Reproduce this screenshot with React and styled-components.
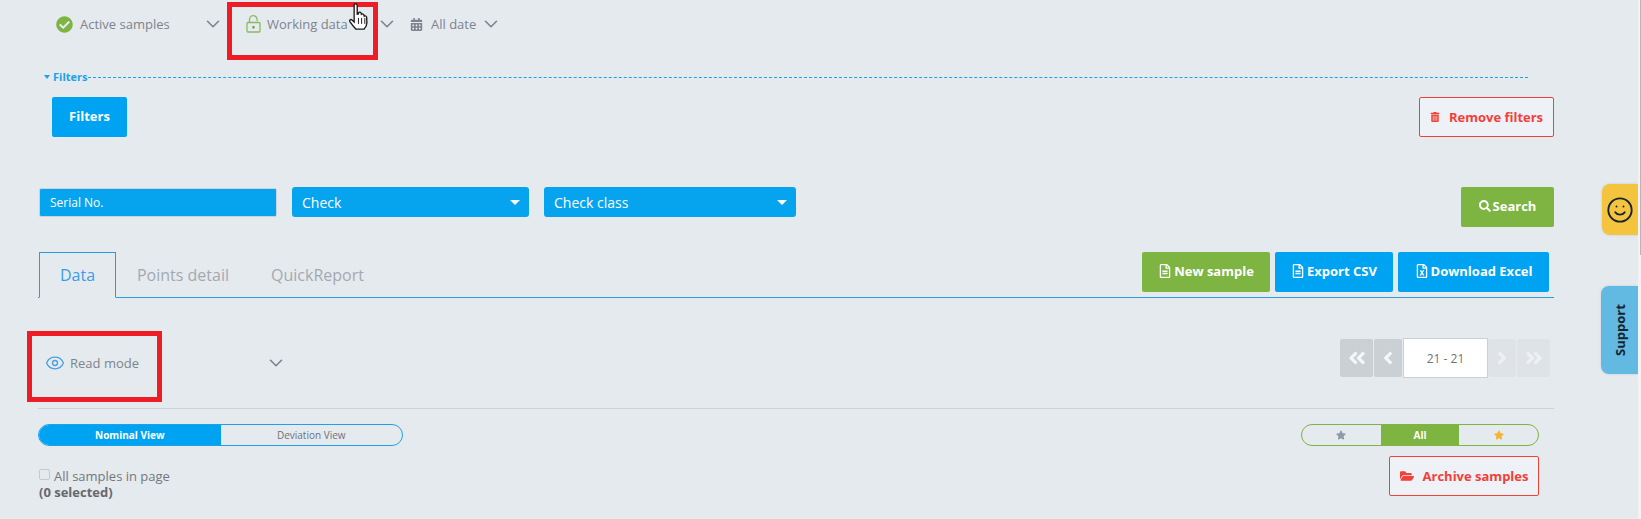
import React from 'react'
import styled, { createGlobalStyle } from 'styled-components'
import { ChevronDown, Eye, Smile } from 'lucide-react'
import {
  FaCheckCircle, FaCalendarAlt, FaTrashAlt, FaSearch, FaRegFileAlt, FaRegFileExcel,
  FaFolderOpen, FaStar, FaAngleDoubleLeft, FaAngleDoubleRight, FaAngleLeft, FaAngleRight,
} from 'react-icons/fa'

const GlobalStyle = createGlobalStyle`
html, body {
  margin: 0;
  height: 519px;
  overflow: hidden;
  background: #e5eaef;
  font-family: "Open Sans", "Liberation Sans", sans-serif;
}
* { box-sizing: border-box; }
`

const Page = styled.div`
position: relative;
width: 1641px;
height: 519px;
overflow: hidden;
padding: 0 87px 0 38px;
`

const TopBar = styled.div`
display: flex;
align-items: center;
height: 48px;
padding-left: 18px;
`

const Selector = styled.div`
display: flex;
align-items: center;
width: ${props => props.$width}px;
margin-right: ${props => props.$gap || 0}px;
color: #7d848d;
font-size: 13px;
`

const SelectorLabel = styled.span`
margin-left: ${props => props.$offset || 6}px;
flex: ${props => props.$grow ? 1 : 'none'};
width: ${props => props.$width ? props.$width + 'px' : 'auto'};
white-space: nowrap;
`

const Chevron = styled(ChevronDown)`
width: 22px;
height: 22px;
color: #7b828a;
stroke-width: 1.7;
margin-left: ${props => props.$left || 0}px;
flex: none;
`

const Legend = styled.div`
display: flex;
align-items: center;
height: 12px;
margin: 23px 26px 0 6px;
color: #1ea1ea;
font-size: 11px;
font-weight: 700;
`

const LegendText = styled.span`
margin-top: -2px;
`

const LegendCaret = styled.span`
width: 0;
height: 0;
border-left: 3.5px solid transparent;
border-right: 3.5px solid transparent;
border-top: 4px solid #1ea1ea;
margin-right: 3px;
`

const LegendLine = styled.span`
flex: 1;
border-top: 1px dashed #1ea1ea;
`

const FilterRow = styled.div`
display: flex;
justify-content: space-between;
margin-top: 14px;
padding-left: 14px;
`

const Button = styled.button`
display: inline-flex;
align-items: center;
justify-content: center;
gap: 2px;
height: 40px;
width: ${props => props.$width}px;
padding: 0 0 2px;
border: 0;
border-radius: 2px;
background: ${props => props.$green ? '#7eb441' : '#00a3f2'};
color: #fff;
font: 700 13px "Open Sans", sans-serif;
`

const DangerButton = styled.button`
display: inline-flex;
align-items: center;
justify-content: center;
gap: 9px;
height: 40px;
width: ${props => props.$width}px;
padding: 0 0 1px;
border: 1px solid #f24236;
border-radius: 2px;
background: #eef1f5;
color: #f2403a;
font: 700 13px "Open Sans", sans-serif;
`

const SearchRow = styled.div`
display: flex;
align-items: flex-start;
margin-top: 50px;
padding-left: 1px;
`

const SerialInput = styled.div`
display: flex;
align-items: center;
width: 238px;
height: 29px;
margin: 1px -1px 0 0;
padding-left: 10px;
border: 1px solid #c9d3da;
border-radius: 2px;
background: #06a4ef;
color: #fff;
font-size: 12px;
`

const Select = styled.div`
display: flex;
align-items: center;
justify-content: space-between;
width: ${props => props.$width}px;
height: 30px;
margin-left: ${props => props.$left}px;
padding: 0 9px 0 10px;
border-radius: 3px;
background: #06a4ef;
color: #fff;
font-size: 14px;
`

const SelectCaret = styled.span`
width: 0;
height: 0;
border-left: 5.5px solid transparent;
border-right: 5.5px solid transparent;
border-top: 5px solid #fff;
`

const SearchSlot = styled.div`
margin-left: auto;
`

const TabsBar = styled.div`
display: flex;
align-items: flex-start;
justify-content: space-between;
height: 46px;
margin-top: 25px;
padding: 0 5px 0 1px;
border-bottom: 1px solid #2b9ae0;
`

const Tabs = styled.div`
display: flex;
`

const Tab = styled.div`
height: ${props => props.$active ? 46 : 45}px;
width: ${props => props.$width}px;
border: 1px solid ${props => props.$active ? '#2b9ae0' : 'transparent'};
border-bottom-color: ${props => props.$active ? '#e5eaef' : 'transparent'};
color: ${props => props.$active ? '#3a9de6' : '#a3a9b0'};
font-size: 16px;
line-height: 44px;
text-align: center;
`

const Actions = styled.div`
display: flex;
gap: 5px;
`

const ModeRow = styled.div`
display: flex;
justify-content: space-between;
height: 111px;
padding: 40px 4px 0 7px;
border-bottom: 1px solid #cdd2d6;
`

const ModeSelector = styled.div`
display: flex;
align-items: center;
height: 50px;
color: #7d848d;
font-size: 13px;
`

const Pager = styled.div`
display: flex;
align-items: center;
gap: 1px;
height: 40px;
`

const PagerButton = styled.div`
display: flex;
align-items: center;
justify-content: center;
width: ${props => props.$width}px;
height: 38px;
border-radius: 2px;
background: ${props => props.$off ? '#dfe3e7' : '#cbd0d5'};
color: ${props => props.$off ? '#eef1f3' : '#f4f6f7'};
font-size: 20px;
`

const PagerInput = styled.div`
display: flex;
align-items: center;
justify-content: center;
width: 85px;
height: 40px;
margin-right: -1px;
border: 1px solid #cbd0d5;
background: #fff;
color: #6f7479;
font-size: 12px;
`

const Lower = styled.div`
display: flex;
justify-content: space-between;
margin-top: 15px;
padding-right: 15px;
`

const LeftColumn = styled.div`
display: flex;
flex-direction: column;
`

const RightColumn = styled.div`
display: flex;
flex-direction: column;
align-items: flex-end;
gap: 10px;
`

const Toggle = styled.div`
display: flex;
width: ${props => props.$width}px;
height: 22px;
overflow: hidden;
border: 1px solid ${props => props.$color};
border-radius: 11px;
`

const ToggleItem = styled.div`
display: flex;
align-items: center;
justify-content: center;
flex: 1;
background: ${props => props.$on || 'transparent'};
color: ${props => props.$on ? '#fff' : '#6d7278'};
font: ${props => props.$on ? 700 : 400} 10px "Open Sans", sans-serif;
`

const StarIcon = styled(FaStar)`
width: 10px;
height: 10px;
color: ${props => props.color};
`

const CheckLine = styled.label`
display: flex;
align-items: center;
height: 16px;
margin: 22px 0 0 1px;
color: #74777b;
font-size: 13px;
`

const CheckBox = styled.span`
width: 11px;
height: 11px;
margin: -4px 4px 0 0;
border: 1px solid #c5cacf;
border-radius: 2px;
`

const Selected = styled.div`
margin-left: 1px;
color: #66686b;
font-size: 13px;
font-weight: 700;
line-height: 17px;
`

const RowCheck = styled.div`
width: 10px;
height: 10px;
margin: 22px 0 0 288px;
background: #c5c8cb;
`

const RedBox = styled.div`
position: absolute;
left: ${props => props.$x}px;
top: ${props => props.$y}px;
width: ${props => props.$w}px;
height: ${props => props.$h}px;
border: 5px solid #ee1c25;
pointer-events: none;
`

const HandCursor = styled.svg`
position: absolute;
left: 349px;
top: 3px;
width: 19px;
height: 28px;
`

const SideTab = styled.div`
position: absolute;
right: 3px;
top: ${props => props.$top}px;
display: flex;
align-items: center;
justify-content: center;
width: ${props => props.$w}px;
height: ${props => props.$h}px;
border-radius: 8px 0 0 8px;
background: ${props => props.$bg};
box-shadow: 0 0 3px rgba(0, 0, 0, .12);
color: #16242c;
`

const SupportLabel = styled.span`
transform: rotate(-90deg);
font-size: 13px;
font-weight: 700;
`

const ScrollTrack = styled.div`
position: absolute;
right: 0;
top: 0;
width: 3px;
height: 519px;
background: #f1f3f5;
`

const ScrollThumb = styled.div`
margin-left: 2px;
width: 1px;
height: 255px;
background: #b4b6b8;
`

const OpenLock = () => (
  <svg width="15" height="18" viewBox="0 0 15 18" fill="none" stroke="#86bd5b" strokeWidth="1.3">
    <rect x="1" y="7.5" width="13" height="9.5" rx="1" />
    <path d="M3.5 7.5V4.5a3.8 3.8 0 0 1 7.6 0V6" />
    <path d="M7.5 11v2.5" stroke="#7a8a3a" strokeWidth="2" />
  </svg>
)

const App = () => {
  return (
    <Page>
      <GlobalStyle />
      <TopBar>
        <Selector $width={168} $gap={22}>
          <FaCheckCircle size={17} color="#7eb441" />
          <SelectorLabel $grow $offset={7}>Active samples</SelectorLabel>
          <Chevron />
        </Selector>
        <Selector $width={152} $gap={12}>
          <OpenLock />
          <SelectorLabel $grow>Working data</SelectorLabel>
          <Chevron />
        </Selector>
        <Selector $width={110}>
          <FaCalendarAlt size={13} color="#7d848d" />
          <SelectorLabel $offset={8}>All date</SelectorLabel>
          <Chevron $left={4} />
        </Selector>
      </TopBar>

      <Legend>
        <LegendCaret />
        <LegendText>Filters</LegendText>
        <LegendLine />
      </Legend>

      <FilterRow>
        <Button $width={75}>Filters</Button>
        <DangerButton $width={135}><FaTrashAlt size={10} />Remove filters</DangerButton>
      </FilterRow>

      <SearchRow>
        <SerialInput>Serial No.</SerialInput>
        <Select $width={237} $left={16}>Check<SelectCaret /></Select>
        <Select $width={252} $left={15}>Check class<SelectCaret /></Select>
        <SearchSlot>
          <Button $width={93} $green><FaSearch size={12} />Search</Button>
        </SearchSlot>
      </SearchRow>

      <TabsBar>
        <Tabs>
          <Tab $active $width={77}>Data</Tab>
          <Tab $width={134}>Points detail</Tab>
          <Tab $width={135}>QuickReport</Tab>
        </Tabs>
        <Actions>
          <Button $width={128} $green><FaRegFileAlt size={14} />New sample</Button>
          <Button $width={118}><FaRegFileAlt size={14} />Export CSV</Button>
          <Button $width={151}><FaRegFileExcel size={14} />Download Excel</Button>
        </Actions>
      </TabsBar>

      <ModeRow>
        <ModeSelector>
          <Eye size={20} color="#4a9fe0" strokeWidth={1.6} />
          <SelectorLabel $offset={5} $width={195}>Read mode</SelectorLabel>
          <Chevron />
        </ModeSelector>
        <Pager>
          <PagerButton $width={33}><FaAngleDoubleLeft /></PagerButton>
          <PagerButton $width={28}><FaAngleLeft /></PagerButton>
          <PagerInput>21 - 21</PagerInput>
          <PagerButton $width={28} $off><FaAngleRight /></PagerButton>
          <PagerButton $width={33} $off><FaAngleDoubleRight /></PagerButton>
        </Pager>
      </ModeRow>

      <Lower>
        <LeftColumn>
          <Toggle $width={365} $color="#1ea1ea">
            <ToggleItem $on="#00a3f2">Nominal View</ToggleItem>
            <ToggleItem>Deviation View</ToggleItem>
          </Toggle>
          <CheckLine><CheckBox />All samples in page</CheckLine>
          <Selected>(0 selected)</Selected>
        </LeftColumn>
        <RightColumn>
          <Toggle $width={238} $color="#7eb441">
            <ToggleItem><StarIcon color="#8e9aa8" /></ToggleItem>
            <ToggleItem $on="#7eb441">All</ToggleItem>
            <ToggleItem><StarIcon color="#f6b52c" /></ToggleItem>
          </Toggle>
          <DangerButton $width={150}><FaFolderOpen size={14} />Archive samples</DangerButton>
        </RightColumn>
      </Lower>
      <RowCheck />

      <RedBox $x={227} $y={2} $w={151} $h={58} />
      <RedBox $x={27} $y={331} $w={135} $h={71} />

      <HandCursor viewBox="1.5 0.5 15.5 23.5" preserveAspectRatio="none">
        <path
          d="M6 1.5c1-.8 2.2 0 2.2 1.2V10l1-.2V8.6c.8-.7 1.9-.5 2.2.4l.2 1c.8-.6 1.9-.3 2.1.6l.2.9c.8-.5 1.9-.1 2 1l.2 4.5c0 2.4-1 4-2.4 5.5H7.2c-1.4-1.6-3.2-3.7-5-6.4-.6-1 .5-2.2 1.5-1.5l2 1.8V2.7c0-.5 0-.9.3-1.2z"
          fill="#fff"
          stroke="#1a1a1a"
          strokeWidth="1.1"
        />
        <path d="M9.2 13v5M11.8 13v5M14.4 13v5" stroke="#1a1a1a" strokeWidth=".8" />
      </HandCursor>

      <SideTab $top={184} $w={36} $h={51} $bg="#f5c43f"><Smile size={28} strokeWidth={1.6} /></SideTab>
      <SideTab $top={286} $w={37} $h={88} $bg="#62b9e2"><SupportLabel>Support</SupportLabel></SideTab>
      <ScrollTrack><ScrollThumb /></ScrollTrack>
    </Page>
  )
}

export default App
